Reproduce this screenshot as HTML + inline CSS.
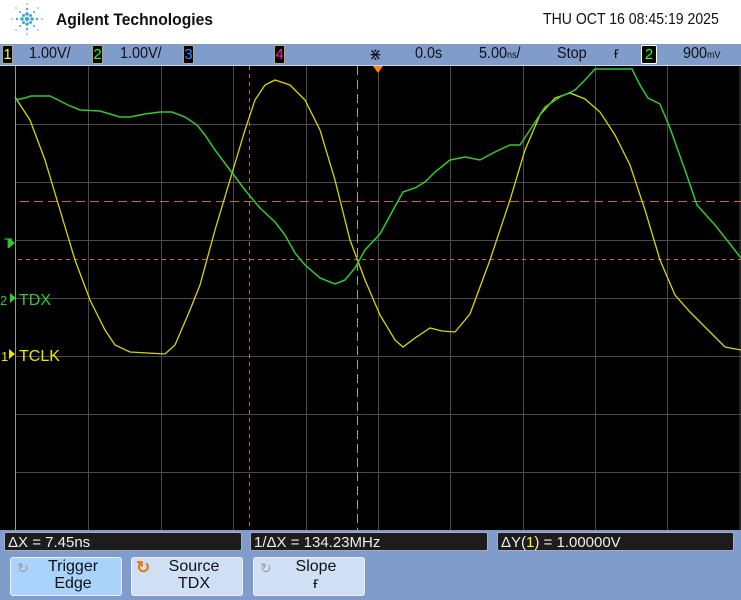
<!DOCTYPE html>
<html><head><meta charset="utf-8"><style>
body{margin:0;width:741px;height:600px;overflow:hidden;background:#000;font-family:"Liberation Sans",sans-serif;position:relative}
.abs{position:absolute;white-space:nowrap}
.hdr{left:0;top:0;width:741px;height:44px;background:#fff}
.bar{left:0;top:44px;width:741px;height:21px;background:#7f9ccb;border-bottom:1px solid #c8d4ea}
.bt{font-size:16px;color:#111;top:45px;transform:scaleX(.9);transform-origin:left}
.cb{top:45px;width:9px;height:17px;background:#000;border:1px solid #b9a77a;border-radius:2px;font-size:15px;line-height:17px;text-align:center}
.bot{left:0;top:530px;width:741px;height:70px;background:#7f9ccb}
.meas{top:532px;height:19px;background:#1c1c1c;border:1px solid #aab;border-radius:2px;color:#eee;font-size:15px;line-height:19px;padding-left:3px;box-sizing:border-box}
.btn{top:557px;height:39px;border:1px solid #eef;border-radius:3px;box-sizing:border-box;background:#cfe0f6;font-size:16px;line-height:17px;text-align:center;color:#111;padding-left:14px}
</style></head><body>
<div class="abs hdr"></div>
<svg class="abs" style="left:4px;top:2px" width="44" height="34" viewBox="0 0 44 34">
<g fill="#3aa7d8">
<circle cx="23" cy="17" r="2.2"/><circle cx="18" cy="17" r="1.8"/><circle cx="28" cy="17" r="1.8"/>
<circle cx="23" cy="12" r="1.8"/><circle cx="23" cy="22" r="1.8"/>
<circle cx="19.5" cy="13.5" r="1.5"/><circle cx="26.5" cy="13.5" r="1.5"/><circle cx="19.5" cy="20.5" r="1.5"/><circle cx="26.5" cy="20.5" r="1.5"/>
<circle cx="13" cy="17" r="1.2"/><circle cx="33" cy="17" r="1.2"/><circle cx="23" cy="7" r="1.2"/><circle cx="23" cy="27" r="1.2"/>
<circle cx="16" cy="10" r="1"/><circle cx="30" cy="10" r="1"/><circle cx="16" cy="24" r="1"/><circle cx="30" cy="24" r="1"/>
<circle cx="8" cy="17" r=".8"/><circle cx="38" cy="17" r=".8"/><circle cx="23" cy="2" r=".8"/><circle cx="23" cy="32" r=".8"/>
<circle cx="12" cy="6" r=".7"/><circle cx="34" cy="6" r=".7"/><circle cx="12" cy="28" r=".7"/><circle cx="34" cy="28" r=".7"/>
</g></svg>
<div class="abs" style="left:56px;top:10px;font-size:17px;font-weight:bold;color:#111;transform:scaleX(.92);transform-origin:left">Agilent Technologies</div>
<div class="abs" style="left:543px;top:11px;font-size:16px;color:#111;transform:scaleX(.88);transform-origin:left">THU OCT 16 08:45:19 2025</div>
<div class="abs bar"></div>
<div class="abs cb" style="left:2px;color:#ff0">1</div>
<div class="abs bt" style="left:29px">1.00V/</div>
<div class="abs cb" style="left:92px;color:#2f2">2</div>
<div class="abs bt" style="left:120px">1.00V/</div>
<div class="abs cb" style="left:183px;color:#38f">3</div>
<div class="abs cb" style="left:274px;color:#f2a">4</div>
<div class="abs bt" style="left:369px;font-size:17px">⋇</div>
<div class="abs bt" style="left:415px">0.0s</div>
<div class="abs bt" style="left:479px">5.00<span style="font-size:10px">ns</span>/</div>
<div class="abs bt" style="left:557px">Stop</div>
<div class="abs bt" style="left:614px">ғ</div>
<div class="abs cb" style="left:641px;width:14px;color:#2f2;border-color:#fff">2</div>
<div class="abs bt" style="left:683px">900<span style="font-size:10px">mV</span></div>

<svg class="abs" style="left:0;top:66px" width="741" height="464" viewBox="0 66 741 464">
<g stroke="#4a4a4a" stroke-width="1">
<path d="M88.5 66V530M161.5 66V530M233.5 66V530M306.5 66V530M378.5 66V530M450.5 66V530M523.5 66V530M595.5 66V530M667.5 66V530M740 66V530"/>
<path d="M15 124.5H741M15 182.5H741M15 240.5H741M15 298.5H741M15 356.5H741M15 414.5H741M15 472.5H741"/>
</g>
<path d="M15.5 66V530" stroke="#999"/>
<path d="M249.5 66V530" stroke="#c87020" stroke-dasharray="4 4"/>
<path d="M357.5 66V530" stroke="#b8a070" stroke-dasharray="9 5"/>
<path d="M20 201.5H741" stroke="#c87020" stroke-dasharray="9 5"/>
<path d="M18 259.5H741" stroke="#c87020" stroke-dasharray="4 4"/>
<polygon points="373,66 383,66 378,73" fill="#f80"/>
<polyline fill="none" stroke="#d8d800" stroke-width="1.3" points="15,97 30,120 45,160 60,210 75,260 90,300 105,330 115,345 130,352 165,354 175,345 190,310 200,285 215,230 230,180 245,130 255,100 265,85 275,80 290,85 305,100 320,130 335,180 350,240 365,280 380,315 395,340 403,347 415,338 430,328 442,331 455,332 470,314 490,260 510,200 525,150 540,115 555,98 570,93 585,99 600,112 615,135 630,165 645,210 660,260 675,295 690,312 710,332 725,347 741,350"/>
<polyline fill="none" stroke="#2ecc2e" stroke-width="1.5" points="15,100 25,98 31,96 50,96 58,100 70,106 80,110 100,111 120,117 130,117 145,114 160,112 172,112 185,117 197,125 205,135 215,150 230,170 245,190 260,208 275,222 285,235 295,253 305,265 320,278 335,284 345,280 355,268 365,250 380,234 392,212 403,192 415,188 425,182 435,172 450,160 465,157 480,160 495,152 510,145 520,145 530,130 545,107 560,97 575,90 585,80 595,69 632,69 640,85 648,98 660,104 670,128 685,170 697,205 715,225 741,258"/>
<g fill="#2ecc2e"><text x="4" y="248" font-size="14" font-family="Liberation Sans">T</text><polygon points="9,238 15,243 9,248"/>
<text x="0" y="305" font-size="13">2</text><polygon points="10,293 16,298 10,303"/>
<text x="19" y="305" font-size="16">TDX</text></g>
<g fill="#e8e800"><text x="1" y="361" font-size="13">1</text><polygon points="9,349 15,354 9,359"/>
<text x="19" y="361" font-size="16">TCLK</text></g>
</svg>

<div class="abs bot"></div>
<div class="abs meas" style="left:4px;width:238px">ΔX = 7.45ns</div>
<div class="abs meas" style="left:250px;width:238px">1/ΔX = 134.23MHz</div>
<div class="abs meas" style="left:497px;width:237px">ΔY(<span style="color:#ff0">1</span>) = 1.00000V</div>
<div class="abs btn" style="left:10px;width:112px;background:#a9d3fb"><span class="abs" style="left:6px;top:2px;color:#a99;font-size:14px">↻</span>Trigger<br>Edge</div>
<div class="abs btn" style="left:131px;width:112px"><span class="abs" style="left:4px;top:1px;color:#e87800;font-size:17px;font-weight:bold">↻</span>Source<br>TDX</div>
<div class="abs btn" style="left:253px;width:112px"><span class="abs" style="left:6px;top:2px;color:#a99;font-size:14px">↻</span>Slope<br>ғ</div>
</body></html>
